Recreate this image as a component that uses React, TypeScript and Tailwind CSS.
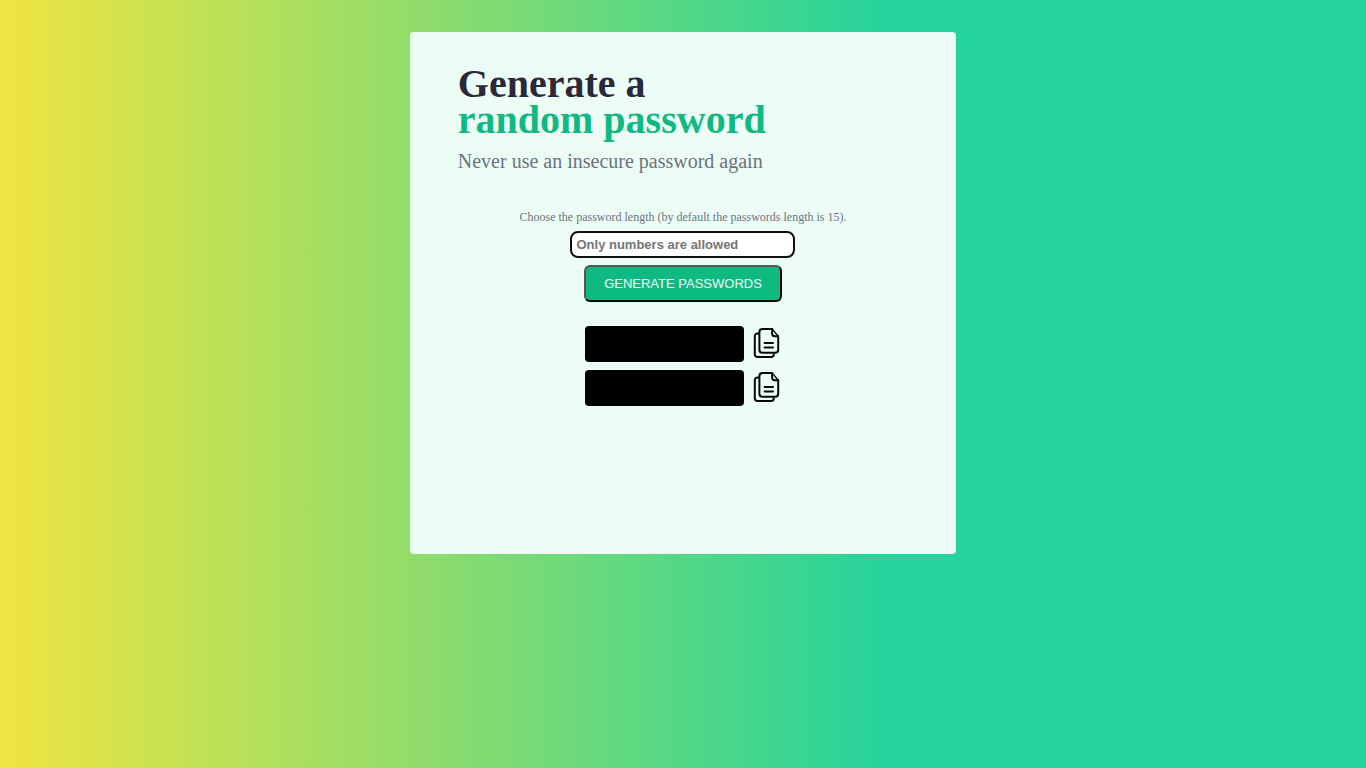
import { useState } from "react";

const CHARACTERS =
  "ABCDEFGHIJKLMNOPQRSTUVWXYZabcdefghijklmnopqrstuvwxyz0123456789~!@#$%^&*()_-+=";

function createPassword(length: number): string {
  let result = "";
  for (let i = 0; i < length; i++) {
    result += CHARACTERS[Math.floor(Math.random() * CHARACTERS.length)];
  }
  return result;
}

function CopyIcon() {
  return (
    <svg
      viewBox="0 0 28 32"
      className="h-8 w-7"
      fill="none"
      stroke="#050807"
      strokeWidth="2"
      strokeLinecap="round"
      strokeLinejoin="round"
      aria-hidden="true"
    >
      <path d="M6.6 5.5H5.5a2.7 2.7 0 0 0-2.7 2.7v18.2a2.7 2.7 0 0 0 2.7 2.7h13.7a2.7 2.7 0 0 0 2.6-2.4" />
      <path d="M20.3 1.1H10.4a3 3 0 0 0-3 3v17.6a3 3 0 0 0 3 3h12.8a3 3 0 0 0 3-3V8.2" />
      <path d="M20.3 1.1l5.9 7.1" strokeWidth="1.4" />
      <path d="M20.1 1.4v4.2a2.6 2.6 0 0 0 2.6 2.6h3.3" />
      <path d="M12.6 14.9h8.4M12.6 19.5h8.4" />
    </svg>
  );
}

function PasswordRow({ value }: { value: string }) {
  return (
    <div className="flex items-center gap-2">
      <output
        aria-label="Generated password"
        className="flex h-9 w-[159px] items-center justify-center overflow-hidden rounded bg-black text-sm text-emerald-400"
      >
        {value}
      </output>
      <button
        type="button"
        aria-label="Copy password"
        className="cursor-pointer"
        onClick={() => navigator.clipboard?.writeText(value)}
      >
        <CopyIcon />
      </button>
    </div>
  );
}

export default function App() {
  const [length, setLength] = useState("");
  const [passwords, setPasswords] = useState(["", ""]);

  const generate = () => {
    const size = Number(length) || 15;
    setPasswords([createPassword(size), createPassword(size)]);
  };

  return (
    <div className="min-h-screen bg-[linear-gradient(to_right,#efe540,#25d39c_65%)] py-8 font-['Liberation_Serif',serif]">
      <main className="mx-auto min-h-[522px] w-2/5 rounded bg-[#ecfdf5] px-12 pt-[34px] pb-12">
        <h1 className="text-[40px] leading-9 font-bold text-[#2b283a]">
          Generate a
          <span className="block text-[#10b981]">random password</span>
        </h1>
        <p className="mt-[11px] text-xl leading-6 text-[#6b7280]">
          Never use an insecure password again
        </p>
        <div className="mt-[37px] flex flex-col items-center">
          <label
            htmlFor="password-length"
            className="text-xs leading-[14px] text-[#6b7280]"
          >
            Choose the password length (by default the passwords length is 15).
          </label>
          <input
            id="password-length"
            type="text"
            inputMode="numeric"
            value={length}
            onChange={(event) => setLength(event.target.value.replace(/\D/g, ""))}
            placeholder="Only numbers are allowed"
            className="mt-[7px] h-[27px] w-[225px] rounded-lg border-2 border-[#101010] bg-white px-1 font-['Liberation_Sans',sans-serif] text-[13px] font-bold outline-none placeholder:text-[#757575]"
          />
          <button
            type="button"
            onClick={generate}
            className="mt-[7px] h-[37px] w-[198px] cursor-pointer rounded-md border-2 border-t-[#555] border-r-black border-b-black border-l-[#555] bg-[#10b981] font-['Liberation_Sans',sans-serif] text-[13px] text-[#ecfdf5]"
          >
            GENERATE PASSWORDS
          </button>
          <div className="mt-6 flex flex-col gap-2">
            {passwords.map((value, index) => (
              <PasswordRow key={index} value={value} />
            ))}
          </div>
        </div>
      </main>
    </div>
  );
}
